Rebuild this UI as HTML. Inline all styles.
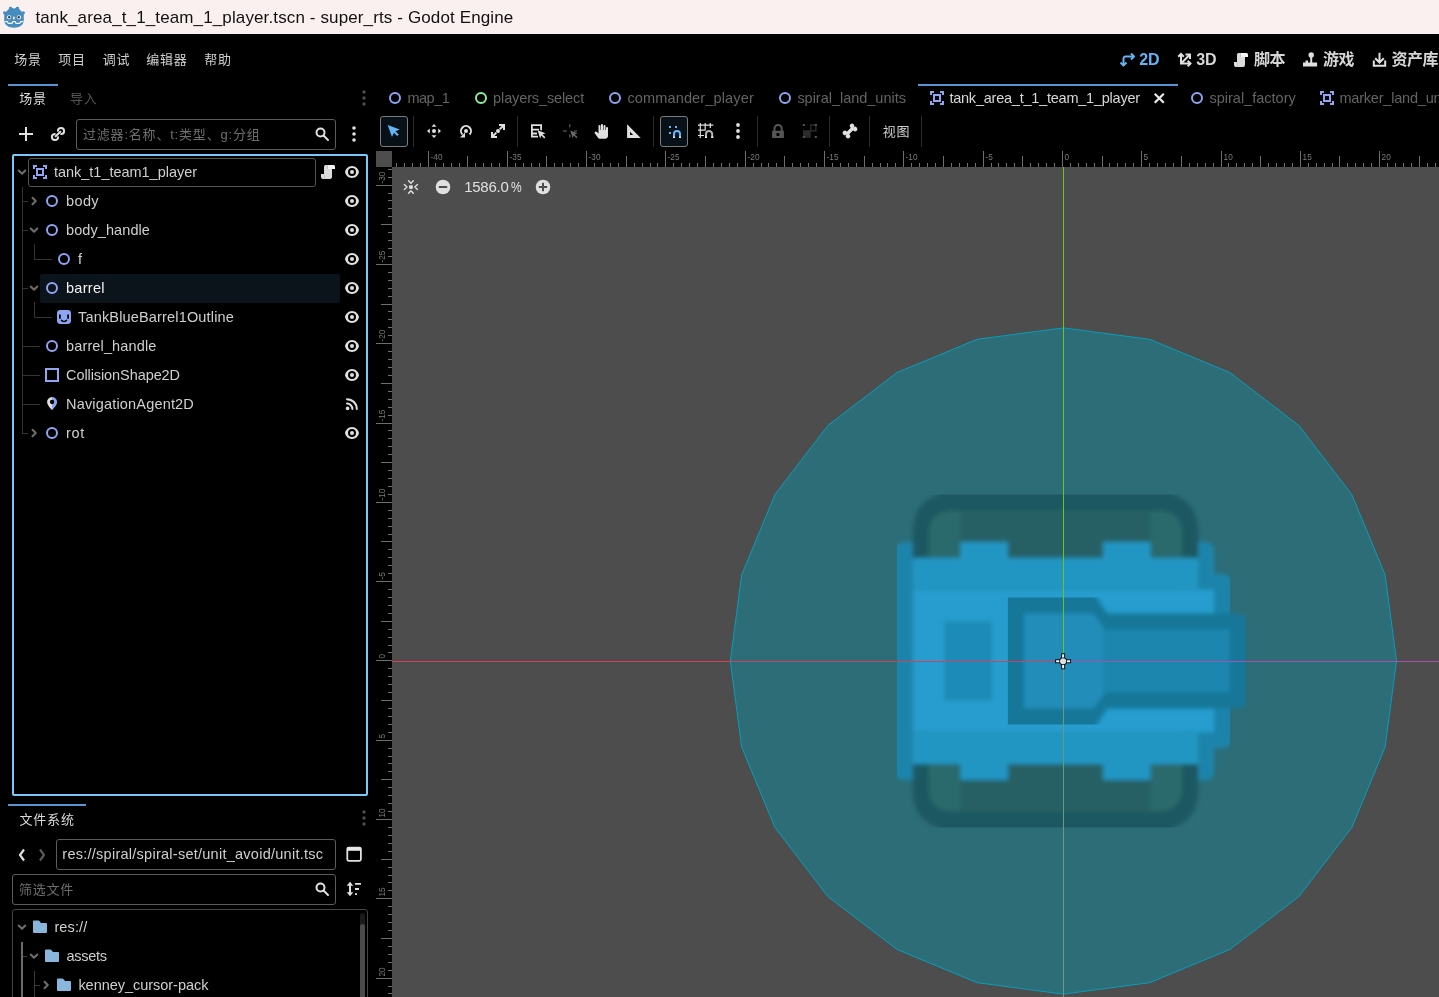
<!DOCTYPE html>
<html lang="zh"><head><meta charset="utf-8"><title>tank_area_t_1_team_1_player.tscn - super_rts - Godot Engine</title>
<style>
html,body{margin:0;padding:0;background:#000;}
body{width:1439px;height:997px;position:relative;overflow:hidden;font-family:"Liberation Sans", "Noto Sans CJK SC", sans-serif;}
.t{position:absolute;white-space:pre;}
.i{position:absolute;overflow:visible;}
.b{position:absolute;box-sizing:border-box;}
#root{position:absolute;left:0;top:0;width:1439px;height:997px;will-change:transform;}
</style></head><body><div id="root">

<div class="b" style="left:0;top:0;width:1439px;height:34px;background:#f9f0ef"></div>
<svg class="i" style="left:0px;top:2px" width="30" height="30" viewBox="0 0 997 997"><g fill="#478cbf"><path d="M140 330H790V600C790 780 640 855 465 855C290 855 140 780 140 600Z"/><path d="M190 340 300 225H630L740 340Z"/><rect x="298" y="155" width="104" height="160" rx="46"/><rect x="528" y="155" width="104" height="160" rx="46"/><path d="M395 195 465 228 535 195V300H395Z"/><circle cx="152" cy="357" r="52"/><circle cx="778" cy="357" r="52"/></g><circle cx="300" cy="510" r="70" fill="#fff"/><circle cx="630" cy="510" r="70" fill="#fff"/><circle cx="306" cy="510" r="42" fill="#414042"/><circle cx="624" cy="510" r="42" fill="#414042"/><rect x="438" y="478" width="50" height="104" rx="22" fill="#fff"/><path fill="none" stroke="#eef4fa" stroke-width="40" d="M150 655H245L275 712H395L425 655H505L535 712H655L685 655H780"/></svg>
<div class="t" style="left:35.4px;top:8.3px;font-size:17px;line-height:20px;color:#111;font-weight:normal;letter-spacing:0.125px;">tank_area_t_1_team_1_player.tscn - super_rts - Godot Engine</div>
<div class="t" style="left:14.3px;top:49.5px;font-size:13px;line-height:20px;color:#cfcfcf;font-weight:normal;letter-spacing:0.75px;">场景</div>
<div class="t" style="left:58.3px;top:49.5px;font-size:13px;line-height:20px;color:#cfcfcf;font-weight:normal;letter-spacing:0.75px;">项目</div>
<div class="t" style="left:102.8px;top:49.5px;font-size:13px;line-height:20px;color:#cfcfcf;font-weight:normal;letter-spacing:0.75px;">调试</div>
<div class="t" style="left:146.3px;top:49.5px;font-size:13px;line-height:20px;color:#cfcfcf;font-weight:normal;letter-spacing:0.75px;">编辑器</div>
<div class="t" style="left:204.3px;top:49.5px;font-size:13px;line-height:20px;color:#cfcfcf;font-weight:normal;letter-spacing:0.75px;">帮助</div>
<svg class="i" style="left:1119.5px;top:51.5px;" width="16" height="16" viewBox="0 0 16 16"><g fill="none" stroke="#64b5f6" stroke-width="2"><path d="M3.500 13.500V6.500a2 2 0 0 1 2-2h8"/><path d="M11 1.500l3 3-3 3M.5 10.500l3 3 3-3" stroke-linejoin="round"/></g></svg>
<div class="t" style="left:1139.2px;top:49.8px;font-size:16px;line-height:20px;color:#64b5f6;font-weight:bold;">2D</div>
<svg class="i" style="left:1176.5px;top:51.5px;" width="16" height="16" viewBox="0 0 16 16"><g fill="none" stroke="#e0e0e0" stroke-width="2"><path d="M4 2v9.500h9.500M4 11.500 13 2.500"/><path d="M1.200 4.800 4 2l2.800 2.800M10.700 8.700l2.800 2.800-2.800 2.800M8.500 2.500h4.500V7"/></g></svg>
<div class="t" style="left:1196.2px;top:49.8px;font-size:16px;line-height:20px;color:#d6d6d6;font-weight:bold;">3D</div>
<svg class="i" style="left:1233.0px;top:51.5px;" width="16" height="16" viewBox="0 0 16 16"><path fill="#dcdcdc" d="M5.500 1A1.500 1.500 0 0 0 4 2.500V10H1v3a2 2 0 0 0 2 2h7a2 2 0 0 0 2-2V5h3V3a2 2 0 0 0-2-2z"/><path fill="#f4f4f4" d="M7.600 1H13a2 2 0 0 1 2 2v2H7.600z"/><path fill="#bdbdbd" d="M7 1.200h.8V5H7zM4 10.200h.6V15H4z"/></svg>
<div class="t" style="left:1254px;top:49.8px;font-size:16px;line-height:20px;color:#d6d6d6;font-weight:bold;letter-spacing:-0.5px;">脚本</div>
<svg class="i" style="left:1302.0px;top:51.5px;" width="16" height="16" viewBox="0 0 16 16"><circle cx="9.200" cy="3" r="2.700" fill="#e0e0e0"/><rect x="8.200" y="4" width="2" height="7" fill="#e0e0e0"/><path fill="#e0e0e0" d="M1 10.600h2.500V8.500H6v2.100h9.100v4H1z"/></svg>
<div class="t" style="left:1323px;top:49.8px;font-size:16px;line-height:20px;color:#d6d6d6;font-weight:bold;letter-spacing:-0.5px;">游戏</div>
<svg class="i" style="left:1370.5px;top:51.5px;" width="16" height="16" viewBox="0 0 16 16"><g fill="none" stroke="#e0e0e0" stroke-width="2"><path d="M8.500 .8v9M4.200 6.200l4.300 4.300 4.300-4.300M2.800 8.500v5.200h11.400V8.500"/></g></svg>
<div class="t" style="left:1391.5px;top:49.8px;font-size:16px;line-height:20px;color:#d6d6d6;font-weight:bold;letter-spacing:-0.5px;">资产库</div>
<div class="b" style="left:8px;top:84px;width:50px;height:2px;background:#5695d2"></div>
<div class="t" style="left:19.3px;top:89.3px;font-size:13px;line-height:20px;color:#dadada;font-weight:normal;letter-spacing:0.8px;">场景</div>
<div class="t" style="left:70px;top:89.3px;font-size:13px;line-height:20px;color:#555;font-weight:normal;letter-spacing:0.8px;">导入</div>
<svg class="i" style="left:18.0px;top:126.0px;" width="16" height="16" viewBox="0 0 16 16"><path fill="#e0e0e0" d="M7 1v6H1v2h6v6h2V9h6V7H9V1z"/></svg>
<svg class="i" style="left:50.0px;top:126.0px;" width="16" height="16" viewBox="0 0 16 16"><g fill="none" stroke="#e0e0e0" stroke-width="2" stroke-linecap="round"><path d="M7.910 4.730A3.100 3.100 0 1 1 11.270 8.090"/><path d="M8.090 11.270A3.100 3.100 0 1 1 4.730 7.910"/><path d="M5.700 10.300 10.300 5.700"/></g></svg>
<div class="b" style="left:76px;top:119px;width:260px;height:31px;border:1px solid #5c5c5c;border-radius:3px"></div>
<div class="t" style="left:83px;top:124.5px;font-size:13px;line-height:20px;color:#6e6e6e;font-weight:normal;letter-spacing:0.8px;">过滤器:名称、t:类型、g:分组</div>
<svg class="i" style="left:313.5px;top:125.5px;" width="16" height="16" viewBox="0 0 16 16"><circle cx="6.500" cy="6.500" r="4" fill="none" stroke="#e0e0e0" stroke-width="2"/><path d="M9.500 9.500l4.500 4.500" stroke="#e0e0e0" stroke-width="2" stroke-linecap="round"/></svg>
<svg class="i" style="left:345.8px;top:126.1px;" width="16" height="16" viewBox="0 0 16 16"><circle cx="8" cy="2" r="1.8" fill="#e0e0e0"/><circle cx="8" cy="8" r="1.8" fill="#e0e0e0"/><circle cx="8" cy="14" r="1.8" fill="#e0e0e0"/></svg>
<div class="b" style="left:12px;top:154px;width:356px;height:642px;border:2px solid #78c8fc;border-radius:2px"></div>
<div class="b" style="left:40px;top:274px;width:300px;height:29px;background:#0b141b;border-radius:2px"></div>
<div class="b" style="left:28px;top:158px;width:288px;height:29px;border:1px solid #555;border-radius:3px"></div>
<div class="b" style="left:22px;top:187px;width:1px;height:246px;background:#343434"></div>
<div class="b" style="left:22px;top:201px;width:6px;height:1px;background:#343434"></div>
<div class="b" style="left:22px;top:230px;width:6px;height:1px;background:#343434"></div>
<div class="b" style="left:22px;top:288px;width:6px;height:1px;background:#343434"></div>
<div class="b" style="left:22px;top:346px;width:18px;height:1px;background:#343434"></div>
<div class="b" style="left:22px;top:375px;width:18px;height:1px;background:#343434"></div>
<div class="b" style="left:22px;top:404px;width:18px;height:1px;background:#343434"></div>
<div class="b" style="left:22px;top:433px;width:6px;height:1px;background:#343434"></div>
<div class="b" style="left:34px;top:244px;width:1px;height:15px;background:#343434"></div>
<div class="b" style="left:34px;top:259px;width:18px;height:1px;background:#343434"></div>
<div class="b" style="left:34px;top:302px;width:1px;height:15px;background:#343434"></div>
<div class="b" style="left:34px;top:317px;width:18px;height:1px;background:#343434"></div>
<svg class="i" style="left:13.5px;top:164.0px;" width="16" height="16" viewBox="0 0 16 16"><path d="M4.700 6.500 8 9.800l3.300-3.300" fill="none" stroke="#6e6e6e" stroke-width="2" stroke-linecap="round" stroke-linejoin="round"/></svg>
<svg class="i" style="left:32.0px;top:164.0px;" width="16" height="16" viewBox="0 0 16 16"><path fill="#8da5f3" d="M1 1v4h2V3h2V1zm10 0v2h2v2h2V1zM4 4v8h8V4zm2 2h4v4H6zm-5 5v4h4v-2H3v-2zm12 0v2h-2v2h4v-4z"/></svg>
<div class="t" style="left:54px;top:161.5px;font-size:14.5px;line-height:20px;color:#cfcfcf;font-weight:normal;letter-spacing:-0.024px;">tank_t1_team1_player</div>
<svg class="i" style="left:344.0px;top:164.0px;" width="16" height="16" viewBox="0 0 16 16"><path fill="#e0e0e0" fill-rule="evenodd" d="M8 2C4.400 2 1.500 5 1 8c.5 3 3.400 6 7 6s6.500-3 7-6c-.5-3-3.400-6-7-6zm0 2a4 4 0 0 1 0 8 4 4 0 0 1 0-8zm0 2a2 2 0 0 0 0 4 2 2 0 0 0 0-4z"/></svg>
<svg class="i" style="left:319.5px;top:164.0px;" width="16" height="16" viewBox="0 0 16 16"><path fill="#dcdcdc" d="M5.500 1A1.500 1.500 0 0 0 4 2.500V10H1v3a2 2 0 0 0 2 2h7a2 2 0 0 0 2-2V5h3V3a2 2 0 0 0-2-2z"/><path fill="#f4f4f4" d="M7.600 1H13a2 2 0 0 1 2 2v2H7.600z"/><path fill="#bdbdbd" d="M7 1.200h.8V5H7zM4 10.200h.6V15H4z"/></svg>
<svg class="i" style="left:26.0px;top:193.0px;" width="16" height="16" viewBox="0 0 16 16"><path d="M6.500 4.700 9.800 8l-3.300 3.300" fill="none" stroke="#6e6e6e" stroke-width="2" stroke-linecap="round" stroke-linejoin="round"/></svg>
<svg class="i" style="left:44.0px;top:193.0px;" width="16" height="16" viewBox="0 0 16 16"><circle cx="8" cy="8" r="5" fill="none" stroke="#8da5f3" stroke-width="2"/></svg>
<div class="t" style="left:66px;top:190.5px;font-size:14.5px;line-height:20px;color:#cfcfcf;font-weight:normal;letter-spacing:0.389px;">body</div>
<svg class="i" style="left:344.0px;top:193.0px;" width="16" height="16" viewBox="0 0 16 16"><path fill="#e0e0e0" fill-rule="evenodd" d="M8 2C4.400 2 1.500 5 1 8c.5 3 3.400 6 7 6s6.500-3 7-6c-.5-3-3.400-6-7-6zm0 2a4 4 0 0 1 0 8 4 4 0 0 1 0-8zm0 2a2 2 0 0 0 0 4 2 2 0 0 0 0-4z"/></svg>
<svg class="i" style="left:26.0px;top:222.0px;" width="16" height="16" viewBox="0 0 16 16"><path d="M4.700 6.500 8 9.800l3.300-3.300" fill="none" stroke="#6e6e6e" stroke-width="2" stroke-linecap="round" stroke-linejoin="round"/></svg>
<svg class="i" style="left:44.0px;top:222.0px;" width="16" height="16" viewBox="0 0 16 16"><circle cx="8" cy="8" r="5" fill="none" stroke="#8da5f3" stroke-width="2"/></svg>
<div class="t" style="left:66px;top:219.5px;font-size:14.5px;line-height:20px;color:#cfcfcf;font-weight:normal;letter-spacing:0.087px;">body_handle</div>
<svg class="i" style="left:344.0px;top:222.0px;" width="16" height="16" viewBox="0 0 16 16"><path fill="#e0e0e0" fill-rule="evenodd" d="M8 2C4.400 2 1.500 5 1 8c.5 3 3.400 6 7 6s6.500-3 7-6c-.5-3-3.400-6-7-6zm0 2a4 4 0 0 1 0 8 4 4 0 0 1 0-8zm0 2a2 2 0 0 0 0 4 2 2 0 0 0 0-4z"/></svg>
<svg class="i" style="left:56.0px;top:251.0px;" width="16" height="16" viewBox="0 0 16 16"><circle cx="8" cy="8" r="5" fill="none" stroke="#8da5f3" stroke-width="2"/></svg>
<div class="t" style="left:78px;top:248.5px;font-size:14.5px;line-height:20px;color:#cfcfcf;font-weight:normal;">f</div>
<svg class="i" style="left:344.0px;top:251.0px;" width="16" height="16" viewBox="0 0 16 16"><path fill="#e0e0e0" fill-rule="evenodd" d="M8 2C4.400 2 1.500 5 1 8c.5 3 3.400 6 7 6s6.500-3 7-6c-.5-3-3.400-6-7-6zm0 2a4 4 0 0 1 0 8 4 4 0 0 1 0-8zm0 2a2 2 0 0 0 0 4 2 2 0 0 0 0-4z"/></svg>
<svg class="i" style="left:26.0px;top:280.0px;" width="16" height="16" viewBox="0 0 16 16"><path d="M4.700 6.500 8 9.800l3.300-3.300" fill="none" stroke="#6e6e6e" stroke-width="2" stroke-linecap="round" stroke-linejoin="round"/></svg>
<svg class="i" style="left:44.0px;top:280.0px;" width="16" height="16" viewBox="0 0 16 16"><circle cx="8" cy="8" r="5" fill="none" stroke="#8da5f3" stroke-width="2"/></svg>
<div class="t" style="left:66px;top:277.5px;font-size:14.5px;line-height:20px;color:#f2f2f2;font-weight:normal;letter-spacing:0.288px;">barrel</div>
<svg class="i" style="left:344.0px;top:280.0px;" width="16" height="16" viewBox="0 0 16 16"><path fill="#e0e0e0" fill-rule="evenodd" d="M8 2C4.400 2 1.500 5 1 8c.5 3 3.400 6 7 6s6.500-3 7-6c-.5-3-3.400-6-7-6zm0 2a4 4 0 0 1 0 8 4 4 0 0 1 0-8zm0 2a2 2 0 0 0 0 4 2 2 0 0 0 0-4z"/></svg>
<svg class="i" style="left:56.0px;top:309.0px;" width="16" height="16" viewBox="0 0 16 16"><rect x="1" y="1" width="14" height="14" rx="3.400" fill="#8da5f3"/><rect x="3" y="5.300" width="1.800" height="4.600" rx=".9" fill="#000"/><rect x="11.200" y="5.300" width="1.800" height="4.600" rx=".9" fill="#000"/><path d="M5.400 11.300a3.300 3.300 0 0 0 5.200 0" fill="none" stroke="#000" stroke-width="1.500" stroke-linecap="round"/></svg>
<div class="t" style="left:78px;top:306.5px;font-size:14.5px;line-height:20px;color:#cfcfcf;font-weight:normal;letter-spacing:0.167px;">TankBlueBarrel1Outline</div>
<svg class="i" style="left:344.0px;top:309.0px;" width="16" height="16" viewBox="0 0 16 16"><path fill="#e0e0e0" fill-rule="evenodd" d="M8 2C4.400 2 1.500 5 1 8c.5 3 3.400 6 7 6s6.500-3 7-6c-.5-3-3.400-6-7-6zm0 2a4 4 0 0 1 0 8 4 4 0 0 1 0-8zm0 2a2 2 0 0 0 0 4 2 2 0 0 0 0-4z"/></svg>
<svg class="i" style="left:44.0px;top:338.0px;" width="16" height="16" viewBox="0 0 16 16"><circle cx="8" cy="8" r="5" fill="none" stroke="#8da5f3" stroke-width="2"/></svg>
<div class="t" style="left:66px;top:335.5px;font-size:14.5px;line-height:20px;color:#cfcfcf;font-weight:normal;letter-spacing:0.14px;">barrel_handle</div>
<svg class="i" style="left:344.0px;top:338.0px;" width="16" height="16" viewBox="0 0 16 16"><path fill="#e0e0e0" fill-rule="evenodd" d="M8 2C4.400 2 1.500 5 1 8c.5 3 3.400 6 7 6s6.500-3 7-6c-.5-3-3.400-6-7-6zm0 2a4 4 0 0 1 0 8 4 4 0 0 1 0-8zm0 2a2 2 0 0 0 0 4 2 2 0 0 0 0-4z"/></svg>
<svg class="i" style="left:44.0px;top:367.0px;" width="16" height="16" viewBox="0 0 16 16"><path fill="none" stroke="#8da5f3" stroke-width="2" d="M2 2h12v12H2z"/></svg>
<div class="t" style="left:66px;top:364.5px;font-size:14.5px;line-height:20px;color:#cfcfcf;font-weight:normal;letter-spacing:-0.079px;">CollisionShape2D</div>
<svg class="i" style="left:344.0px;top:367.0px;" width="16" height="16" viewBox="0 0 16 16"><path fill="#e0e0e0" fill-rule="evenodd" d="M8 2C4.400 2 1.500 5 1 8c.5 3 3.400 6 7 6s6.500-3 7-6c-.5-3-3.400-6-7-6zm0 2a4 4 0 0 1 0 8 4 4 0 0 1 0-8zm0 2a2 2 0 0 0 0 4 2 2 0 0 0 0-4z"/></svg>
<svg class="i" style="left:44.0px;top:396.0px;" width="16" height="16" viewBox="0 0 16 16"><clipPath id="pl"><rect x="0" y="0" width="8.100" height="16"/></clipPath><clipPath id="pr"><rect x="8.100" y="0" width="8" height="16"/></clipPath><path clip-path="url(#pl)" fill="#e0e0e0" fill-rule="evenodd" d="M8.100 1a5 5 0 0 0-5 5c0 3 3.400 6.400 5 8.200 1.600-1.800 5-5.200 5-8.200a5 5 0 0 0-5-5zm0 2.800a2.200 2.200 0 0 1 0 4.400 2.200 2.200 0 0 1 0-4.400z"/><path clip-path="url(#pr)" fill="#8da5f3" fill-rule="evenodd" d="M8.100 1a5 5 0 0 0-5 5c0 3 3.400 6.400 5 8.200 1.600-1.800 5-5.200 5-8.200a5 5 0 0 0-5-5zm0 2.800a2.200 2.200 0 0 1 0 4.400 2.200 2.200 0 0 1 0-4.400z"/></svg>
<div class="t" style="left:66px;top:393.5px;font-size:14.5px;line-height:20px;color:#cfcfcf;font-weight:normal;letter-spacing:0.18px;">NavigationAgent2D</div>
<svg class="i" style="left:344.0px;top:396.0px;" width="16" height="16" viewBox="0 0 16 16"><path fill="none" stroke="#e0e0e0" stroke-width="2" stroke-linecap="round" d="M3 3.200a9.800 9.800 0 0 1 9.800 9.800M3 7.600A5.400 5.400 0 0 1 8.400 13"/><circle cx="3.600" cy="12.400" r="1.800" fill="#e0e0e0"/></svg>
<svg class="i" style="left:26.0px;top:425.0px;" width="16" height="16" viewBox="0 0 16 16"><path d="M6.500 4.700 9.800 8l-3.300 3.300" fill="none" stroke="#6e6e6e" stroke-width="2" stroke-linecap="round" stroke-linejoin="round"/></svg>
<svg class="i" style="left:44.0px;top:425.0px;" width="16" height="16" viewBox="0 0 16 16"><circle cx="8" cy="8" r="5" fill="none" stroke="#8da5f3" stroke-width="2"/></svg>
<div class="t" style="left:66px;top:422.5px;font-size:14.5px;line-height:20px;color:#cfcfcf;font-weight:normal;letter-spacing:0.693px;">rot</div>
<svg class="i" style="left:344.0px;top:425.0px;" width="16" height="16" viewBox="0 0 16 16"><path fill="#e0e0e0" fill-rule="evenodd" d="M8 2C4.400 2 1.500 5 1 8c.5 3 3.400 6 7 6s6.500-3 7-6c-.5-3-3.400-6-7-6zm0 2a4 4 0 0 1 0 8 4 4 0 0 1 0-8zm0 2a2 2 0 0 0 0 4 2 2 0 0 0 0-4z"/></svg>
<div class="b" style="left:8px;top:804px;width:78px;height:2px;background:#5695d2"></div>
<div class="t" style="left:19.4px;top:809.6px;font-size:13px;line-height:20px;color:#dadada;font-weight:normal;letter-spacing:0.85px;">文件系统</div>
<svg class="i" style="left:355.9px;top:810.1px;" width="16" height="16" viewBox="0 0 16 16"><circle cx="8" cy="2" r="1.7" fill="#4d4d4d"/><circle cx="8" cy="8" r="1.7" fill="#4d4d4d"/><circle cx="8" cy="14" r="1.7" fill="#4d4d4d"/></svg>
<svg class="i" style="left:14.0px;top:846.5px;" width="16" height="16" viewBox="0 0 16 16"><path d="M10 2.500 6 8l4 5.500" fill="none" stroke="#e0e0e0" stroke-width="2.200"/></svg>
<svg class="i" style="left:34.0px;top:846.5px;" width="16" height="16" viewBox="0 0 16 16"><path d="M6 2.500 10 8l-4 5.500" fill="none" stroke="#5a5a5a" stroke-width="2.200"/></svg>
<div class="b" style="left:56px;top:839px;width:280px;height:31px;border:1px solid #5c5c5c;border-radius:3px"></div>
<div class="t" style="left:62.3px;top:843.8px;font-size:14.5px;line-height:20px;color:#cfcfcf;font-weight:normal;letter-spacing:0.26px;">res://spiral/spiral-set/unit_avoid/unit.tsc</div>
<svg class="i" style="left:346.0px;top:846.0px;" width="16" height="16" viewBox="0 0 16 16"><rect x="1.300" y="1.600" width="13.600" height="13.200" rx="1.500" fill="none" stroke="#e0e0e0" stroke-width="1.800"/><path fill="#e8e8e8" d="M1.300 1.600h13.600v3.200H1.300z"/></svg>
<div class="b" style="left:12px;top:874px;width:324px;height:31px;border:1px solid #5c5c5c;border-radius:3px"></div>
<div class="t" style="left:19px;top:880.3px;font-size:13px;line-height:20px;color:#6e6e6e;font-weight:normal;letter-spacing:0.75px;">筛选文件</div>
<svg class="i" style="left:313.5px;top:880.5px;" width="16" height="16" viewBox="0 0 16 16"><circle cx="6.500" cy="6.500" r="4" fill="none" stroke="#e0e0e0" stroke-width="2"/><path d="M9.500 9.500l4.500 4.500" stroke="#e0e0e0" stroke-width="2" stroke-linecap="round"/></svg>
<svg class="i" style="left:346.0px;top:881.0px;" width="16" height="16" viewBox="0 0 16 16"><path fill="#e0e0e0" d="M4 .8.700 4.800H3v6.400H.7L4 15.200l3.300-4H5V4.800h2.300zM9 2h6v1.800H9zM9 7.100h4v1.800H9zM9 12.200h2V14H9z"/></svg>
<div class="b" style="left:12px;top:909px;width:356px;height:100px;border:1px solid #444;border-radius:3px"></div>
<div class="b" style="left:360px;top:913px;width:5px;height:90px;background:#1a1a1a;border-radius:2.500px"></div>
<div class="b" style="left:360px;top:924px;width:5px;height:90px;background:#4a4a4a;border-radius:2.500px"></div>
<div class="b" style="left:21px;top:942px;width:2px;height:60px;background:#6c6c6c"></div>
<div class="b" style="left:23px;top:956px;width:4px;height:1px;background:#3c3c3c"></div>
<div class="b" style="left:34px;top:971px;width:1px;height:30px;background:#3c3c3c"></div>
<div class="b" style="left:35px;top:985px;width:5px;height:1px;background:#3c3c3c"></div>
<svg class="i" style="left:13.5px;top:919.0px;" width="16" height="16" viewBox="0 0 16 16"><path d="M4.700 6.500 8 9.800l3.300-3.300" fill="none" stroke="#6e6e6e" stroke-width="2" stroke-linecap="round" stroke-linejoin="round"/></svg>
<svg class="i" style="left:32.0px;top:919.0px;" width="16" height="16" viewBox="0 0 16 16"><path fill="#88b6dd" d="M2 1.500a1 1 0 0 0-1 1V13a1 1 0 0 0 1 1h12a1 1 0 0 0 1-1V5a1 1 0 0 0-1-1H9L7.300 1.900A1 1 0 0 0 6.500 1.500z"/></svg>
<div class="t" style="left:54.4px;top:916.5px;font-size:14.5px;line-height:20px;color:#cfcfcf;font-weight:normal;letter-spacing:0.129px;">res://</div>
<svg class="i" style="left:25.5px;top:948.0px;" width="16" height="16" viewBox="0 0 16 16"><path d="M4.700 6.500 8 9.800l3.300-3.300" fill="none" stroke="#6e6e6e" stroke-width="2" stroke-linecap="round" stroke-linejoin="round"/></svg>
<svg class="i" style="left:44.0px;top:948.0px;" width="16" height="16" viewBox="0 0 16 16"><path fill="#88b6dd" d="M2 1.500a1 1 0 0 0-1 1V13a1 1 0 0 0 1 1h12a1 1 0 0 0 1-1V5a1 1 0 0 0-1-1H9L7.300 1.900A1 1 0 0 0 6.500 1.500z"/></svg>
<div class="t" style="left:66.4px;top:945.5px;font-size:14.5px;line-height:20px;color:#cfcfcf;font-weight:normal;letter-spacing:-0.251px;">assets</div>
<svg class="i" style="left:37.5px;top:977.0px;" width="16" height="16" viewBox="0 0 16 16"><path d="M6.500 4.700 9.800 8l-3.300 3.300" fill="none" stroke="#6e6e6e" stroke-width="2" stroke-linecap="round" stroke-linejoin="round"/></svg>
<svg class="i" style="left:56.0px;top:977.0px;" width="16" height="16" viewBox="0 0 16 16"><path fill="#88b6dd" d="M2 1.500a1 1 0 0 0-1 1V13a1 1 0 0 0 1 1h12a1 1 0 0 0 1-1V5a1 1 0 0 0-1-1H9L7.300 1.900A1 1 0 0 0 6.500 1.500z"/></svg>
<div class="t" style="left:78.4px;top:974.5px;font-size:14.5px;line-height:20px;color:#cfcfcf;font-weight:normal;letter-spacing:-0.031px;">kenney_cursor-pack</div>
<svg class="i" style="left:355.9px;top:90.4px;" width="16" height="16" viewBox="0 0 16 16"><circle cx="8" cy="2" r="1.7" fill="#4d4d4d"/><circle cx="8" cy="8" r="1.7" fill="#4d4d4d"/><circle cx="8" cy="14" r="1.7" fill="#4d4d4d"/></svg>
<div class="b" style="left:918px;top:84px;width:260px;height:2px;background:#5695d2"></div>
<svg class="i" style="left:387.0px;top:90.0px;" width="16" height="16" viewBox="0 0 16 16"><circle cx="8" cy="8" r="5" fill="none" stroke="#8da5f3" stroke-width="2"/></svg>
<div class="t" style="left:407.4px;top:87.7px;font-size:14.5px;line-height:20px;color:#646464;font-weight:normal;letter-spacing:-0.467px;">map_1</div>
<svg class="i" style="left:472.7px;top:90.0px;" width="16" height="16" viewBox="0 0 16 16"><circle cx="8" cy="8" r="5" fill="none" stroke="#8eef97" stroke-width="2"/></svg>
<div class="t" style="left:493.09999999999997px;top:87.7px;font-size:14.5px;line-height:20px;color:#646464;font-weight:normal;letter-spacing:-0.12px;">players_select</div>
<svg class="i" style="left:607.0px;top:90.0px;" width="16" height="16" viewBox="0 0 16 16"><circle cx="8" cy="8" r="5" fill="none" stroke="#8da5f3" stroke-width="2"/></svg>
<div class="t" style="left:627.4px;top:87.7px;font-size:14.5px;line-height:20px;color:#646464;font-weight:normal;letter-spacing:0.149px;">commander_player</div>
<svg class="i" style="left:777.0px;top:90.0px;" width="16" height="16" viewBox="0 0 16 16"><circle cx="8" cy="8" r="5" fill="none" stroke="#8da5f3" stroke-width="2"/></svg>
<div class="t" style="left:797.4px;top:87.7px;font-size:14.5px;line-height:20px;color:#646464;font-weight:normal;letter-spacing:-0.019px;">spiral_land_units</div>
<svg class="i" style="left:929.0px;top:90.0px;" width="16" height="16" viewBox="0 0 16 16"><path fill="#8da5f3" d="M1 1v4h2V3h2V1zm10 0v2h2v2h2V1zM4 4v8h8V4zm2 2h4v4H6zm-5 5v4h4v-2H3v-2zm12 0v2h-2v2h4v-4z"/></svg>
<div class="t" style="left:949.4px;top:87.7px;font-size:14.5px;line-height:20px;color:#d8d8d8;font-weight:normal;letter-spacing:-0.229px;">tank_area_t_1_team_1_player</div>
<svg class="i" style="left:1189.0px;top:90.0px;" width="16" height="16" viewBox="0 0 16 16"><circle cx="8" cy="8" r="5" fill="none" stroke="#8da5f3" stroke-width="2"/></svg>
<div class="t" style="left:1209.4px;top:87.7px;font-size:14.5px;line-height:20px;color:#646464;font-weight:normal;letter-spacing:0.012px;">spiral_factory</div>
<svg class="i" style="left:1319.0px;top:90.0px;" width="16" height="16" viewBox="0 0 16 16"><path fill="#8da5f3" d="M1 1v4h2V3h2V1zm10 0v2h2v2h2V1zM4 4v8h8V4zm2 2h4v4H6zm-5 5v4h4v-2H3v-2zm12 0v2h-2v2h4v-4z"/></svg>
<div class="t" style="left:1339.4px;top:87.7px;font-size:14.5px;line-height:20px;color:#646464;font-weight:normal;letter-spacing:-0.2px;">marker_land_units_player</div>
<svg class="i" style="left:1151.75px;top:90.75px;" width="14.5" height="14.5" viewBox="0 0 16 16"><path d="M3 3l10 10M13 3 3 13" stroke="#ececec" stroke-width="2.400" fill="none"/></svg>
<div class="b" style="left:412.5px;top:116px;width:1px;height:31px;background:#2b2b2b"></div>
<div class="b" style="left:516.5px;top:116px;width:1px;height:31px;background:#2b2b2b"></div>
<div class="b" style="left:652.5px;top:116px;width:1px;height:31px;background:#2b2b2b"></div>
<div class="b" style="left:756.5px;top:116px;width:1px;height:31px;background:#2b2b2b"></div>
<div class="b" style="left:828.5px;top:116px;width:1px;height:31px;background:#2b2b2b"></div>
<div class="b" style="left:869.0px;top:116px;width:1px;height:31px;background:#2b2b2b"></div>
<div class="b" style="left:920.5px;top:116px;width:1px;height:31px;background:#2b2b2b"></div>
<div class="b" style="left:380px;top:116px;width:28px;height:31px;border:1px solid #7c7c7c;border-radius:3px;background:#091118"></div>
<div class="b" style="left:660px;top:116px;width:28px;height:31px;border:1px solid #7c7c7c;border-radius:3px;background:#091118"></div>
<svg class="i" style="left:386.0px;top:123.0px;" width="16" height="16" viewBox="0 0 16 16"><path fill="#64b5f6" d="M1.700 2 13.800 6.400 9.400 8.300l3.300 3.300-1.500 1.500-3.300-3.300-1.900 4.300z"/></svg>
<svg class="i" style="left:426.0px;top:123.0px;" width="16" height="16" viewBox="0 0 16 16"><path fill="#e0e0e0" d="M8 1 5.500 3.800h5zM3.800 5.500 1 8l2.800 2.500zM12.200 5.500v5L15 8zM5.500 12.200 8 15l2.500-2.800z"/><circle cx="8" cy="8" r="2" fill="#e0e0e0"/></svg>
<svg class="i" style="left:458.0px;top:123.0px;" width="16" height="16" viewBox="0 0 16 16"><path fill="none" stroke="#e0e0e0" stroke-width="2" d="M4.460 11.540A5 5 0 1 1 11.540 11.540"/><path fill="#e0e0e0" d="M2 14.500h5v-5z"/><circle cx="8" cy="8" r="2" fill="#e0e0e0"/></svg>
<svg class="i" style="left:490.0px;top:123.0px;" width="16" height="16" viewBox="0 0 16 16"><path fill="#e0e0e0" d="M9 1h6v6h-2V4.400L10.400 7 9 5.600 11.600 3H9zM1 9h2v2.600L5.600 9 7 10.400 4.400 13H7v2H1z"/><circle cx="8" cy="8" r="2" fill="#e0e0e0"/></svg>
<svg class="i" style="left:530.0px;top:123.0px;" width="16" height="16" viewBox="0 0 16 16"><path fill="#e0e0e0" d="M1 1.300h11v6h-1.800V3.100H2.800v2.600H9v1.800H2.800v2.100H7v1.800H2.800v1.400H8v1.800H1z"/><path fill="#e0e0e0" d="M7.600 7.300l7.900 2.900-3 1.200 2.900 2.900-1.200 1.200-2.900-2.900-1.200 3z"/></svg>
<svg class="i" style="left:562.0px;top:123.0px;" width="16" height="16" viewBox="0 0 16 16"><path fill="#4c4c4c" d="M7 1.300h1.500v2.900H7zM.9 7.300h3.900v1.500H.9zM12.100 7.300H15v1.500h-2.900zM7 11.500h1.500v3.100H7z"/><path fill="#686868" d="M8.200 7.600l7.300 2.700-2.700 1.100 2.700 2.700-1.100 1.100-2.700-2.700-1.100 2.700z"/></svg>
<svg class="i" style="left:594.0px;top:123.0px;" width="16" height="16" viewBox="0 0 16 16"><path fill="#e0e0e0" d="M8 1a1 1 0 0 0-1 1v5H6.500V3a1 1 0 0 0-2 0v7.500L2.600 8.800a1.200 1.200 0 0 0-1.900 1.400l3.300 4.600c.4.600 1 .9 1.700.9H11c1.700 0 3-1.300 3-3V5a1 1 0 0 0-2 0v2h-.5V3a1 1 0 0 0-2 0v4H9V2a1 1 0 0 0-1-1z"/></svg>
<svg class="i" style="left:626.0px;top:123.0px;" width="16" height="16" viewBox="0 0 16 16"><path fill="#e0e0e0" fill-rule="evenodd" d="M1.100 1.300 14.700 14.900H1.100zM4 8.800V12h3.200z"/></svg>
<svg class="i" style="left:666.0px;top:123.0px;" width="16" height="16" viewBox="0 0 16 16"><path fill="#64b5f6" d="M3 3v2h2V3zm6 0v2h2V3zM3 9v2h2V9zm8-2a4 4 0 0 0-4 4v4h2v-4a2 2 0 0 1 4 0v4h2v-4a4 4 0 0 0-4-4z"/><path fill="#d6ecfb" d="M7 13.600h2V15H7zM13 13.600h2V15h-2z"/></svg>
<svg class="i" style="left:698.0px;top:123.0px;" width="16" height="16" viewBox="0 0 16 16"><path fill="#e0e0e0" d="M1.700 0h1.200v15H1.700zM6.600 0h1.200v7.200H6.600zM11.700 0h1.200v5H11.700zM0 1.600h15.300v1.200H0zM0 6.600h7.500v1.200H0zM0 11.900h6v1.200H0z"/><path fill="none" stroke="#b4b4b4" stroke-width="2" d="M8 15v-3.800a3.100 3.100 0 0 1 6.200 0V15"/><path fill="#f4f4f4" d="M7 13.600h2V15H7zM13.200 13.600h2V15h-2z"/></svg>
<svg class="i" style="left:770.0px;top:123.0px;" width="16" height="16" viewBox="0 0 16 16"><path fill="#565656" fill-rule="evenodd" d="M2.100 7.800h11.800v7.100H2.100zM6.500 10.100h2.900v3H6.500z"/><path fill="none" stroke="#565656" stroke-width="2" d="M4.500 8V5.500a3.600 3.600 0 0 1 7.200 0V8"/></svg>
<svg class="i" style="left:802.0px;top:123.0px;" width="16" height="16" viewBox="0 0 16 16"><path fill="#2b2b2b" d="M1 7.200h7.700v7.700H1z"/><path fill="none" stroke="#2b2b2b" stroke-width="1.400" d="M8.800 2h5.100v5.700H8.800z"/><path fill="#555" d="M.8 1h2v2h-2zM12.800 1h2v2h-2zM12.800 13h2v2h-2zM.8 13h2v2h-2z"/></svg>
<svg class="i" style="left:842.0px;top:123.0px;" width="16" height="16" viewBox="0 0 16 16"><g transform="rotate(-45 8 8)" fill="#e0e0e0"><rect x="3" y="6.300" width="10" height="3.400"/><circle cx="3" cy="5.800" r="2.300"/><circle cx="3" cy="10.200" r="2.300"/><circle cx="13" cy="5.800" r="2.300"/><circle cx="13" cy="10.200" r="2.300"/></g></svg>
<svg class="i" style="left:729.8px;top:123.0px;" width="16" height="16" viewBox="0 0 16 16"><circle cx="8" cy="2" r="1.9" fill="#e0e0e0"/><circle cx="8" cy="8" r="1.9" fill="#e0e0e0"/><circle cx="8" cy="14" r="1.9" fill="#e0e0e0"/></svg>
<div class="t" style="left:882.7px;top:122.19999999999999px;font-size:13px;line-height:20px;color:#cfcfcf;font-weight:normal;letter-spacing:0.8px;">视图</div>
<svg class="i" style="left:392px;top:167px" width="1047" height="830" viewBox="392 167 1047 830"><defs><filter id="bl" x="-10%" y="-10%" width="120%" height="120%"><feGaussianBlur stdDeviation="2.2"/></filter><linearGradient id="xg" x1="392" x2="1439" gradientUnits="userSpaceOnUse"><stop offset="0" stop-color="#d8405a"/><stop offset="1" stop-color="#ae50a8"/></linearGradient></defs><rect x="392" y="167" width="1047" height="830" fill="#4d4d4d"/><polygon points="1396.5,661.0 1385.1,747.2 1351.8,827.5 1298.9,896.5 1229.9,949.4 1149.6,982.7 1063.4,994.1 977.2,982.7 896.9,949.4 827.9,896.5 775.0,827.5 741.7,747.2 730.3,661.0 741.7,574.8 775.0,494.5 827.9,425.5 896.9,372.6 977.2,339.3 1063.4,327.9 1149.6,339.3 1229.9,372.6 1298.9,425.5 1351.8,494.5 1385.1,574.8" fill="#2d6d78"/><clipPath id="cb"><rect x="0" y="0" width="333.06" height="333.06"/></clipPath><g transform="translate(896.87,494.47)" clip-path="url(#cb)"><g filter="url(#bl)"><path fill="#1c5862" d="M15.86 95.16V33.31Q18.24 7.14 41.24 0V-9.52H275.96V0Q298.96 7.14 301.34 33.31V95.16z"/><path fill="#256165" d="M31.72 95.16V36.48Q33.31 17.45 52.34 15.86H264.86Q283.89 17.45 285.48 36.48V95.16z"/><path fill="#29696c" d="M31.72 95.16V38.06Q33.31 18.24 53.92 16.65H63.44V95.16z"/><path fill="#29696c" d="M285.48 95.16V38.06Q283.89 18.24 263.28 16.65H253.76V95.16z"/><rect x="63.44" y="47.58" width="47.58" height="31.72" fill="#2196c3"/><rect x="206.18" y="47.58" width="47.58" height="31.72" fill="#2196c3"/><polygon points="-9.52,53.92 6.34,47.58 15.86,47.58 15.86,174.46 -9.52,174.46" fill="#1b84aa"/><polygon points="301.34,47.58 312.44,47.58 317.20,53.92 317.20,79.30 326.72,79.30 342.58,87.23 342.58,174.46 301.34,174.46" fill="#1b84aa"/><rect x="15.86" y="63.44" width="285.48" height="31.72" fill="#2196c3"/><g transform="translate(0,333.06) scale(1,-1)"><path fill="#1c5862" d="M15.86 95.16V33.31Q18.24 7.14 41.24 0V-9.52H275.96V0Q298.96 7.14 301.34 33.31V95.16z"/><path fill="#256165" d="M31.72 95.16V36.48Q33.31 17.45 52.34 15.86H264.86Q283.89 17.45 285.48 36.48V95.16z"/><path fill="#29696c" d="M31.72 95.16V38.06Q33.31 18.24 53.92 16.65H63.44V95.16z"/><path fill="#29696c" d="M285.48 95.16V38.06Q283.89 18.24 263.28 16.65H253.76V95.16z"/><rect x="63.44" y="47.58" width="47.58" height="31.72" fill="#2196c3"/><rect x="206.18" y="47.58" width="47.58" height="31.72" fill="#2196c3"/><polygon points="-9.52,53.92 6.34,47.58 15.86,47.58 15.86,174.46 -9.52,174.46" fill="#1b84aa"/><polygon points="301.34,47.58 312.44,47.58 317.20,53.92 317.20,79.30 326.72,79.30 342.58,87.23 342.58,174.46 301.34,174.46" fill="#1b84aa"/><rect x="15.86" y="63.44" width="285.48" height="31.72" fill="#2196c3"/></g><rect x="15.86" y="95.16" width="301.34" height="142.74" fill="#259dce"/><rect x="47.58" y="126.88" width="47.58" height="79.30" fill="#1f8bb7"/></g></g><clipPath id="cr"><rect x="0" y="0" width="237.90" height="126.88"/></clipPath><g transform="translate(1007.89,597.56)" clip-path="url(#cr)"><g filter="url(#bl)"><polygon points="-9.52,-9.52 88.82,-9.52 88.82,0.00 98.33,14.27 98.33,112.61 88.82,126.88 88.82,136.40 -9.52,136.40" fill="#147799"/><path fill="#147799" d="M95.16 15.86H229.97L247.42 22.20V104.68L229.97 111.02H95.16z"/><polygon points="15.86,15.86 85.64,15.86 95.95,30.13 95.95,96.75 85.64,111.02 15.86,111.02" fill="#208db9"/><rect x="95.95" y="31.72" width="126.09" height="63.44" fill="#1a86ae"/></g></g><polygon points="1396.5,661.0 1385.1,747.2 1351.8,827.5 1298.9,896.5 1229.9,949.4 1149.6,982.7 1063.4,994.1 977.2,982.7 896.9,949.4 827.9,896.5 775.0,827.5 741.7,747.2 730.3,661.0 741.7,574.8 775.0,494.5 827.9,425.5 896.9,372.6 977.2,339.3 1063.4,327.9 1149.6,339.3 1229.9,372.6 1298.9,425.5 1351.8,494.5 1385.1,574.8" fill="none" stroke="#089dbb" stroke-width="1"/><rect x="392" y="661" width="671" height="1" fill="#d63f5c"/><rect x="1064" y="661" width="375" height="1" fill="#a850aa"/><rect x="1063" y="167" width="1" height="494" fill="#74c020"/><rect x="1063" y="662" width="1" height="340" fill="#6a9a78"/><g transform="translate(1063.1,661.2)"><path d="M-2-8h4v16h-4zM-8-2h16v4h-16z" fill="#0c1418"/><circle r="3.900" fill="#0c1418"/><path d="M-1-7h2v3.200h-2zM-1 3.800h2v3.200h-2zM-7-1h3.200v2h-3.200zM3.800-1h3.200v2h-3.200z" fill="#f4f4f4"/><circle r="3" fill="#dedede"/></g></svg>
<svg class="i" style="left:403.0px;top:179.0px;" width="16" height="16" viewBox="0 0 16 16"><rect x="6.100" y="6.200" width="3.700" height="3.700" rx=".8" fill="#e0e0e0"/><g fill="none" stroke="#e0e0e0" stroke-width="1.400" stroke-linecap="round" stroke-linejoin="round"><path d="M1.300 5.600 4 8 1.300 10.400M14.500 5.600 11.800 8l2.700 2.400M5.500 1.700 7.900 4.200l2.400-2.500M5.500 14.300l2.400-2.500 2.400 2.500"/></g></svg>
<svg class="i" style="left:435.0px;top:179.0px;" width="16" height="16" viewBox="0 0 16 16"><circle cx="8" cy="8" r="7.300" fill="#e0e0e0"/><rect x="3.800" y="7" width="8.400" height="2" fill="#4d4d4d"/></svg>
<svg class="i" style="left:535.0px;top:179.0px;" width="16" height="16" viewBox="0 0 16 16"><circle cx="8" cy="8" r="7.300" fill="#e0e0e0"/><rect x="3.800" y="7" width="8.400" height="2" fill="#4d4d4d"/><rect x="7" y="3.800" width="2" height="8.400" fill="#4d4d4d"/></svg>
<div class="t" style="left:464.2px;top:177.3px;font-size:15px;line-height:20px;color:#e0e0e0;font-weight:normal;letter-spacing:-0.25px;word-spacing:-1px;">1586.0 <span style="display:inline-block;transform:scaleX(.8);transform-origin:0 50%">%</span></div>
<svg class="i" style="left:376px;top:151px" width="1063" height="846" viewBox="376 151 1063 846" font-family='"Liberation Sans", "Noto Sans CJK SC", sans-serif' font-size="9.8" fill="#7c7c7c"><rect x="376" y="151" width="16" height="16" fill="#4d4d4d"/><rect x="396" y="163" width="1" height="4" fill="#6e6e6e"/><rect x="404" y="163" width="1" height="4" fill="#6e6e6e"/><rect x="412" y="163" width="1" height="4" fill="#6e6e6e"/><rect x="420" y="163" width="1" height="4" fill="#6e6e6e"/><rect x="428" y="151" width="1" height="16" fill="#6e6e6e"/><text transform="translate(430.6,160.2) scale(.84,1)">-40</text><rect x="435" y="163" width="1" height="4" fill="#6e6e6e"/><rect x="443" y="163" width="1" height="4" fill="#6e6e6e"/><rect x="451" y="163" width="1" height="4" fill="#6e6e6e"/><rect x="459" y="163" width="1" height="4" fill="#6e6e6e"/><rect x="467" y="156" width="1" height="11" fill="#6e6e6e"/><rect x="475" y="163" width="1" height="4" fill="#6e6e6e"/><rect x="483" y="163" width="1" height="4" fill="#6e6e6e"/><rect x="491" y="163" width="1" height="4" fill="#6e6e6e"/><rect x="499" y="163" width="1" height="4" fill="#6e6e6e"/><rect x="507" y="151" width="1" height="16" fill="#6e6e6e"/><text transform="translate(509.6,160.2) scale(.84,1)">-35</text><rect x="515" y="163" width="1" height="4" fill="#6e6e6e"/><rect x="523" y="163" width="1" height="4" fill="#6e6e6e"/><rect x="531" y="163" width="1" height="4" fill="#6e6e6e"/><rect x="539" y="163" width="1" height="4" fill="#6e6e6e"/><rect x="546" y="156" width="1" height="11" fill="#6e6e6e"/><rect x="554" y="163" width="1" height="4" fill="#6e6e6e"/><rect x="562" y="163" width="1" height="4" fill="#6e6e6e"/><rect x="570" y="163" width="1" height="4" fill="#6e6e6e"/><rect x="578" y="163" width="1" height="4" fill="#6e6e6e"/><rect x="586" y="151" width="1" height="16" fill="#6e6e6e"/><text transform="translate(588.6,160.2) scale(.84,1)">-30</text><rect x="594" y="163" width="1" height="4" fill="#6e6e6e"/><rect x="602" y="163" width="1" height="4" fill="#6e6e6e"/><rect x="610" y="163" width="1" height="4" fill="#6e6e6e"/><rect x="618" y="163" width="1" height="4" fill="#6e6e6e"/><rect x="626" y="156" width="1" height="11" fill="#6e6e6e"/><rect x="634" y="163" width="1" height="4" fill="#6e6e6e"/><rect x="642" y="163" width="1" height="4" fill="#6e6e6e"/><rect x="650" y="163" width="1" height="4" fill="#6e6e6e"/><rect x="657" y="163" width="1" height="4" fill="#6e6e6e"/><rect x="665" y="151" width="1" height="16" fill="#6e6e6e"/><text transform="translate(667.6,160.2) scale(.84,1)">-25</text><rect x="673" y="163" width="1" height="4" fill="#6e6e6e"/><rect x="681" y="163" width="1" height="4" fill="#6e6e6e"/><rect x="689" y="163" width="1" height="4" fill="#6e6e6e"/><rect x="697" y="163" width="1" height="4" fill="#6e6e6e"/><rect x="705" y="156" width="1" height="11" fill="#6e6e6e"/><rect x="713" y="163" width="1" height="4" fill="#6e6e6e"/><rect x="721" y="163" width="1" height="4" fill="#6e6e6e"/><rect x="729" y="163" width="1" height="4" fill="#6e6e6e"/><rect x="737" y="163" width="1" height="4" fill="#6e6e6e"/><rect x="745" y="151" width="1" height="16" fill="#6e6e6e"/><text transform="translate(747.6,160.2) scale(.84,1)">-20</text><rect x="753" y="163" width="1" height="4" fill="#6e6e6e"/><rect x="761" y="163" width="1" height="4" fill="#6e6e6e"/><rect x="768" y="163" width="1" height="4" fill="#6e6e6e"/><rect x="776" y="163" width="1" height="4" fill="#6e6e6e"/><rect x="784" y="156" width="1" height="11" fill="#6e6e6e"/><rect x="792" y="163" width="1" height="4" fill="#6e6e6e"/><rect x="800" y="163" width="1" height="4" fill="#6e6e6e"/><rect x="808" y="163" width="1" height="4" fill="#6e6e6e"/><rect x="816" y="163" width="1" height="4" fill="#6e6e6e"/><rect x="824" y="151" width="1" height="16" fill="#6e6e6e"/><text transform="translate(826.6,160.2) scale(.84,1)">-15</text><rect x="832" y="163" width="1" height="4" fill="#6e6e6e"/><rect x="840" y="163" width="1" height="4" fill="#6e6e6e"/><rect x="848" y="163" width="1" height="4" fill="#6e6e6e"/><rect x="856" y="163" width="1" height="4" fill="#6e6e6e"/><rect x="864" y="156" width="1" height="11" fill="#6e6e6e"/><rect x="872" y="163" width="1" height="4" fill="#6e6e6e"/><rect x="880" y="163" width="1" height="4" fill="#6e6e6e"/><rect x="887" y="163" width="1" height="4" fill="#6e6e6e"/><rect x="895" y="163" width="1" height="4" fill="#6e6e6e"/><rect x="903" y="151" width="1" height="16" fill="#6e6e6e"/><text transform="translate(905.6,160.2) scale(.84,1)">-10</text><rect x="911" y="163" width="1" height="4" fill="#6e6e6e"/><rect x="919" y="163" width="1" height="4" fill="#6e6e6e"/><rect x="927" y="163" width="1" height="4" fill="#6e6e6e"/><rect x="935" y="163" width="1" height="4" fill="#6e6e6e"/><rect x="943" y="156" width="1" height="11" fill="#6e6e6e"/><rect x="951" y="163" width="1" height="4" fill="#6e6e6e"/><rect x="959" y="163" width="1" height="4" fill="#6e6e6e"/><rect x="967" y="163" width="1" height="4" fill="#6e6e6e"/><rect x="975" y="163" width="1" height="4" fill="#6e6e6e"/><rect x="983" y="151" width="1" height="16" fill="#6e6e6e"/><text transform="translate(985.6,160.2) scale(.84,1)">-5</text><rect x="991" y="163" width="1" height="4" fill="#6e6e6e"/><rect x="998" y="163" width="1" height="4" fill="#6e6e6e"/><rect x="1006" y="163" width="1" height="4" fill="#6e6e6e"/><rect x="1014" y="163" width="1" height="4" fill="#6e6e6e"/><rect x="1022" y="156" width="1" height="11" fill="#6e6e6e"/><rect x="1030" y="163" width="1" height="4" fill="#6e6e6e"/><rect x="1038" y="163" width="1" height="4" fill="#6e6e6e"/><rect x="1046" y="163" width="1" height="4" fill="#6e6e6e"/><rect x="1054" y="163" width="1" height="4" fill="#6e6e6e"/><rect x="1062" y="151" width="1" height="16" fill="#6e6e6e"/><text transform="translate(1064.6,160.2) scale(.84,1)">0</text><rect x="1070" y="163" width="1" height="4" fill="#6e6e6e"/><rect x="1078" y="163" width="1" height="4" fill="#6e6e6e"/><rect x="1086" y="163" width="1" height="4" fill="#6e6e6e"/><rect x="1094" y="163" width="1" height="4" fill="#6e6e6e"/><rect x="1102" y="156" width="1" height="11" fill="#6e6e6e"/><rect x="1109" y="163" width="1" height="4" fill="#6e6e6e"/><rect x="1117" y="163" width="1" height="4" fill="#6e6e6e"/><rect x="1125" y="163" width="1" height="4" fill="#6e6e6e"/><rect x="1133" y="163" width="1" height="4" fill="#6e6e6e"/><rect x="1141" y="151" width="1" height="16" fill="#6e6e6e"/><text transform="translate(1143.6,160.2) scale(.84,1)">5</text><rect x="1149" y="163" width="1" height="4" fill="#6e6e6e"/><rect x="1157" y="163" width="1" height="4" fill="#6e6e6e"/><rect x="1165" y="163" width="1" height="4" fill="#6e6e6e"/><rect x="1173" y="163" width="1" height="4" fill="#6e6e6e"/><rect x="1181" y="156" width="1" height="11" fill="#6e6e6e"/><rect x="1189" y="163" width="1" height="4" fill="#6e6e6e"/><rect x="1197" y="163" width="1" height="4" fill="#6e6e6e"/><rect x="1205" y="163" width="1" height="4" fill="#6e6e6e"/><rect x="1213" y="163" width="1" height="4" fill="#6e6e6e"/><rect x="1221" y="151" width="1" height="16" fill="#6e6e6e"/><text transform="translate(1223.6,160.2) scale(.84,1)">10</text><rect x="1228" y="163" width="1" height="4" fill="#6e6e6e"/><rect x="1236" y="163" width="1" height="4" fill="#6e6e6e"/><rect x="1244" y="163" width="1" height="4" fill="#6e6e6e"/><rect x="1252" y="163" width="1" height="4" fill="#6e6e6e"/><rect x="1260" y="156" width="1" height="11" fill="#6e6e6e"/><rect x="1268" y="163" width="1" height="4" fill="#6e6e6e"/><rect x="1276" y="163" width="1" height="4" fill="#6e6e6e"/><rect x="1284" y="163" width="1" height="4" fill="#6e6e6e"/><rect x="1292" y="163" width="1" height="4" fill="#6e6e6e"/><rect x="1300" y="151" width="1" height="16" fill="#6e6e6e"/><text transform="translate(1302.6,160.2) scale(.84,1)">15</text><rect x="1308" y="163" width="1" height="4" fill="#6e6e6e"/><rect x="1316" y="163" width="1" height="4" fill="#6e6e6e"/><rect x="1324" y="163" width="1" height="4" fill="#6e6e6e"/><rect x="1332" y="163" width="1" height="4" fill="#6e6e6e"/><rect x="1339" y="156" width="1" height="11" fill="#6e6e6e"/><rect x="1347" y="163" width="1" height="4" fill="#6e6e6e"/><rect x="1355" y="163" width="1" height="4" fill="#6e6e6e"/><rect x="1363" y="163" width="1" height="4" fill="#6e6e6e"/><rect x="1371" y="163" width="1" height="4" fill="#6e6e6e"/><rect x="1379" y="151" width="1" height="16" fill="#6e6e6e"/><text transform="translate(1381.6,160.2) scale(.84,1)">20</text><rect x="1387" y="163" width="1" height="4" fill="#6e6e6e"/><rect x="1395" y="163" width="1" height="4" fill="#6e6e6e"/><rect x="1403" y="163" width="1" height="4" fill="#6e6e6e"/><rect x="1411" y="163" width="1" height="4" fill="#6e6e6e"/><rect x="1419" y="156" width="1" height="11" fill="#6e6e6e"/><rect x="1427" y="163" width="1" height="4" fill="#6e6e6e"/><rect x="1435" y="163" width="1" height="4" fill="#6e6e6e"/><rect x="388" y="169" width="4" height="1" fill="#6e6e6e"/><rect x="388" y="177" width="4" height="1" fill="#6e6e6e"/><rect x="376" y="185" width="16" height="1" fill="#6e6e6e"/><text transform="translate(385.2,183.6) rotate(-90) scale(.84,1)">-30</text><rect x="388" y="193" width="4" height="1" fill="#6e6e6e"/><rect x="388" y="200" width="4" height="1" fill="#6e6e6e"/><rect x="388" y="208" width="4" height="1" fill="#6e6e6e"/><rect x="388" y="216" width="4" height="1" fill="#6e6e6e"/><rect x="381" y="224" width="11" height="1" fill="#6e6e6e"/><rect x="388" y="232" width="4" height="1" fill="#6e6e6e"/><rect x="388" y="240" width="4" height="1" fill="#6e6e6e"/><rect x="388" y="248" width="4" height="1" fill="#6e6e6e"/><rect x="388" y="256" width="4" height="1" fill="#6e6e6e"/><rect x="376" y="264" width="16" height="1" fill="#6e6e6e"/><text transform="translate(385.2,262.6) rotate(-90) scale(.84,1)">-25</text><rect x="388" y="272" width="4" height="1" fill="#6e6e6e"/><rect x="388" y="280" width="4" height="1" fill="#6e6e6e"/><rect x="388" y="288" width="4" height="1" fill="#6e6e6e"/><rect x="388" y="296" width="4" height="1" fill="#6e6e6e"/><rect x="381" y="304" width="11" height="1" fill="#6e6e6e"/><rect x="388" y="311" width="4" height="1" fill="#6e6e6e"/><rect x="388" y="319" width="4" height="1" fill="#6e6e6e"/><rect x="388" y="327" width="4" height="1" fill="#6e6e6e"/><rect x="388" y="335" width="4" height="1" fill="#6e6e6e"/><rect x="376" y="343" width="16" height="1" fill="#6e6e6e"/><text transform="translate(385.2,341.6) rotate(-90) scale(.84,1)">-20</text><rect x="388" y="351" width="4" height="1" fill="#6e6e6e"/><rect x="388" y="359" width="4" height="1" fill="#6e6e6e"/><rect x="388" y="367" width="4" height="1" fill="#6e6e6e"/><rect x="388" y="375" width="4" height="1" fill="#6e6e6e"/><rect x="381" y="383" width="11" height="1" fill="#6e6e6e"/><rect x="388" y="391" width="4" height="1" fill="#6e6e6e"/><rect x="388" y="399" width="4" height="1" fill="#6e6e6e"/><rect x="388" y="407" width="4" height="1" fill="#6e6e6e"/><rect x="388" y="415" width="4" height="1" fill="#6e6e6e"/><rect x="376" y="423" width="16" height="1" fill="#6e6e6e"/><text transform="translate(385.2,421.6) rotate(-90) scale(.84,1)">-15</text><rect x="388" y="430" width="4" height="1" fill="#6e6e6e"/><rect x="388" y="438" width="4" height="1" fill="#6e6e6e"/><rect x="388" y="446" width="4" height="1" fill="#6e6e6e"/><rect x="388" y="454" width="4" height="1" fill="#6e6e6e"/><rect x="381" y="462" width="11" height="1" fill="#6e6e6e"/><rect x="388" y="470" width="4" height="1" fill="#6e6e6e"/><rect x="388" y="478" width="4" height="1" fill="#6e6e6e"/><rect x="388" y="486" width="4" height="1" fill="#6e6e6e"/><rect x="388" y="494" width="4" height="1" fill="#6e6e6e"/><rect x="376" y="502" width="16" height="1" fill="#6e6e6e"/><text transform="translate(385.2,500.6) rotate(-90) scale(.84,1)">-10</text><rect x="388" y="510" width="4" height="1" fill="#6e6e6e"/><rect x="388" y="518" width="4" height="1" fill="#6e6e6e"/><rect x="388" y="526" width="4" height="1" fill="#6e6e6e"/><rect x="388" y="534" width="4" height="1" fill="#6e6e6e"/><rect x="381" y="541" width="11" height="1" fill="#6e6e6e"/><rect x="388" y="549" width="4" height="1" fill="#6e6e6e"/><rect x="388" y="557" width="4" height="1" fill="#6e6e6e"/><rect x="388" y="565" width="4" height="1" fill="#6e6e6e"/><rect x="388" y="573" width="4" height="1" fill="#6e6e6e"/><rect x="376" y="581" width="16" height="1" fill="#6e6e6e"/><text transform="translate(385.2,579.6) rotate(-90) scale(.84,1)">-5</text><rect x="388" y="589" width="4" height="1" fill="#6e6e6e"/><rect x="388" y="597" width="4" height="1" fill="#6e6e6e"/><rect x="388" y="605" width="4" height="1" fill="#6e6e6e"/><rect x="388" y="613" width="4" height="1" fill="#6e6e6e"/><rect x="381" y="621" width="11" height="1" fill="#6e6e6e"/><rect x="388" y="629" width="4" height="1" fill="#6e6e6e"/><rect x="388" y="637" width="4" height="1" fill="#6e6e6e"/><rect x="388" y="645" width="4" height="1" fill="#6e6e6e"/><rect x="388" y="652" width="4" height="1" fill="#6e6e6e"/><rect x="376" y="660" width="16" height="1" fill="#6e6e6e"/><text transform="translate(385.2,658.6) rotate(-90) scale(.84,1)">0</text><rect x="388" y="668" width="4" height="1" fill="#6e6e6e"/><rect x="388" y="676" width="4" height="1" fill="#6e6e6e"/><rect x="388" y="684" width="4" height="1" fill="#6e6e6e"/><rect x="388" y="692" width="4" height="1" fill="#6e6e6e"/><rect x="381" y="700" width="11" height="1" fill="#6e6e6e"/><rect x="388" y="708" width="4" height="1" fill="#6e6e6e"/><rect x="388" y="716" width="4" height="1" fill="#6e6e6e"/><rect x="388" y="724" width="4" height="1" fill="#6e6e6e"/><rect x="388" y="732" width="4" height="1" fill="#6e6e6e"/><rect x="376" y="740" width="16" height="1" fill="#6e6e6e"/><text transform="translate(385.2,738.6) rotate(-90) scale(.84,1)">5</text><rect x="388" y="748" width="4" height="1" fill="#6e6e6e"/><rect x="388" y="756" width="4" height="1" fill="#6e6e6e"/><rect x="388" y="763" width="4" height="1" fill="#6e6e6e"/><rect x="388" y="771" width="4" height="1" fill="#6e6e6e"/><rect x="381" y="779" width="11" height="1" fill="#6e6e6e"/><rect x="388" y="787" width="4" height="1" fill="#6e6e6e"/><rect x="388" y="795" width="4" height="1" fill="#6e6e6e"/><rect x="388" y="803" width="4" height="1" fill="#6e6e6e"/><rect x="388" y="811" width="4" height="1" fill="#6e6e6e"/><rect x="376" y="819" width="16" height="1" fill="#6e6e6e"/><text transform="translate(385.2,817.6) rotate(-90) scale(.84,1)">10</text><rect x="388" y="827" width="4" height="1" fill="#6e6e6e"/><rect x="388" y="835" width="4" height="1" fill="#6e6e6e"/><rect x="388" y="843" width="4" height="1" fill="#6e6e6e"/><rect x="388" y="851" width="4" height="1" fill="#6e6e6e"/><rect x="381" y="859" width="11" height="1" fill="#6e6e6e"/><rect x="388" y="867" width="4" height="1" fill="#6e6e6e"/><rect x="388" y="875" width="4" height="1" fill="#6e6e6e"/><rect x="388" y="882" width="4" height="1" fill="#6e6e6e"/><rect x="388" y="890" width="4" height="1" fill="#6e6e6e"/><rect x="376" y="898" width="16" height="1" fill="#6e6e6e"/><text transform="translate(385.2,896.6) rotate(-90) scale(.84,1)">15</text><rect x="388" y="906" width="4" height="1" fill="#6e6e6e"/><rect x="388" y="914" width="4" height="1" fill="#6e6e6e"/><rect x="388" y="922" width="4" height="1" fill="#6e6e6e"/><rect x="388" y="930" width="4" height="1" fill="#6e6e6e"/><rect x="381" y="938" width="11" height="1" fill="#6e6e6e"/><rect x="388" y="946" width="4" height="1" fill="#6e6e6e"/><rect x="388" y="954" width="4" height="1" fill="#6e6e6e"/><rect x="388" y="962" width="4" height="1" fill="#6e6e6e"/><rect x="388" y="970" width="4" height="1" fill="#6e6e6e"/><rect x="376" y="978" width="16" height="1" fill="#6e6e6e"/><text transform="translate(385.2,976.6) rotate(-90) scale(.84,1)">20</text><rect x="388" y="986" width="4" height="1" fill="#6e6e6e"/><rect x="388" y="993" width="4" height="1" fill="#6e6e6e"/></svg>
</div></body></html>
